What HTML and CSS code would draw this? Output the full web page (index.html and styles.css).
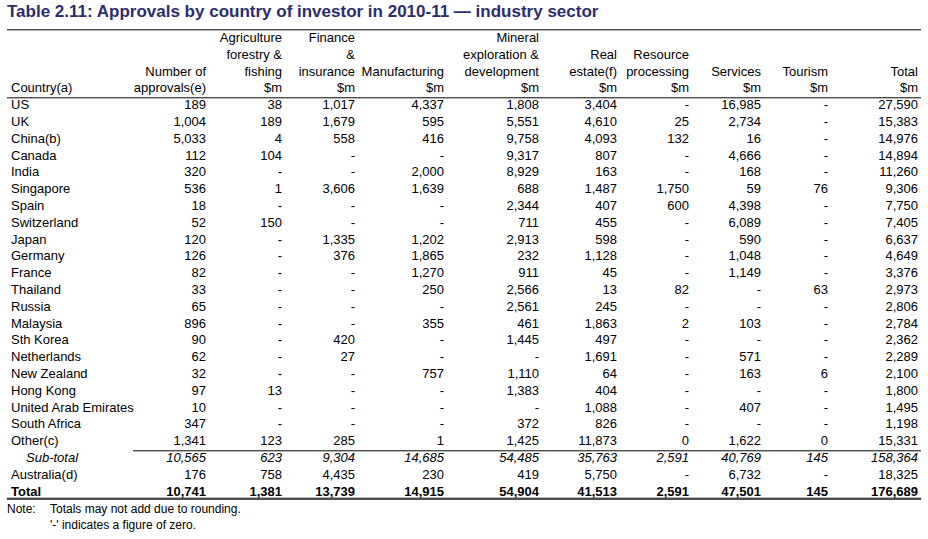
FILE: index.html
```html
<!DOCTYPE html>
<html lang="en">
<head>
<meta charset="utf-8">
<title>Table 2.11</title>
<link rel="stylesheet" href="styles.css">
</head>
<body>
<div class="page">
  <h1 class="title">Table 2.11: Approvals by country of investor in 2010-11 — industry sector</h1>
  <table class="data">
    <colgroup>
      <col class="c-country"><col class="c-num"><col class="c-agri"><col class="c-fin"><col class="c-man"><col class="c-min"><col class="c-real"><col class="c-res"><col class="c-serv"><col class="c-tour"><col class="c-total">
    </colgroup>
    <thead>
      <tr>
        <th class="lbl">Country(a)</th>
        <th>Number of<br>approvals(e)</th>
        <th>Agriculture<br>forestry &amp;<br>fishing<br>$m</th>
        <th>Finance<br>&amp;<br>insurance<br>$m</th>
        <th>Manufacturing<br>$m</th>
        <th>Mineral<br>exploration &amp;<br>development<br>$m</th>
        <th>Real<br>estate(f)<br>$m</th>
        <th>Resource<br>processing<br>$m</th>
        <th>Services<br>$m</th>
        <th>Tourism<br>$m</th>
        <th>Total<br>$m</th>
      </tr>
    </thead>
    <tbody>
      <tr class="first"><td>US</td><td>189</td><td>38</td><td>1,017</td><td>4,337</td><td>1,808</td><td>3,404</td><td>-</td><td>16,985</td><td>-</td><td>27,590</td></tr>
      <tr><td>UK</td><td>1,004</td><td>189</td><td>1,679</td><td>595</td><td>5,551</td><td>4,610</td><td>25</td><td>2,734</td><td>-</td><td>15,383</td></tr>
      <tr><td>China(b)</td><td>5,033</td><td>4</td><td>558</td><td>416</td><td>9,758</td><td>4,093</td><td>132</td><td>16</td><td>-</td><td>14,976</td></tr>
      <tr><td>Canada</td><td>112</td><td>104</td><td>-</td><td>-</td><td>9,317</td><td>807</td><td>-</td><td>4,666</td><td>-</td><td>14,894</td></tr>
      <tr><td>India</td><td>320</td><td>-</td><td>-</td><td>2,000</td><td>8,929</td><td>163</td><td>-</td><td>168</td><td>-</td><td>11,260</td></tr>
      <tr><td>Singapore</td><td>536</td><td>1</td><td>3,606</td><td>1,639</td><td>688</td><td>1,487</td><td>1,750</td><td>59</td><td>76</td><td>9,306</td></tr>
      <tr><td>Spain</td><td>18</td><td>-</td><td>-</td><td>-</td><td>2,344</td><td>407</td><td>600</td><td>4,398</td><td>-</td><td>7,750</td></tr>
      <tr><td>Switzerland</td><td>52</td><td>150</td><td>-</td><td>-</td><td>711</td><td>455</td><td>-</td><td>6,089</td><td>-</td><td>7,405</td></tr>
      <tr><td>Japan</td><td>120</td><td>-</td><td>1,335</td><td>1,202</td><td>2,913</td><td>598</td><td>-</td><td>590</td><td>-</td><td>6,637</td></tr>
      <tr><td>Germany</td><td>126</td><td>-</td><td>376</td><td>1,865</td><td>232</td><td>1,128</td><td>-</td><td>1,048</td><td>-</td><td>4,649</td></tr>
      <tr><td>France</td><td>82</td><td>-</td><td>-</td><td>1,270</td><td>911</td><td>45</td><td>-</td><td>1,149</td><td>-</td><td>3,376</td></tr>
      <tr><td>Thailand</td><td>33</td><td>-</td><td>-</td><td>250</td><td>2,566</td><td>13</td><td>82</td><td>-</td><td>63</td><td>2,973</td></tr>
      <tr><td>Russia</td><td>65</td><td>-</td><td>-</td><td>-</td><td>2,561</td><td>245</td><td>-</td><td>-</td><td>-</td><td>2,806</td></tr>
      <tr><td>Malaysia</td><td>896</td><td>-</td><td>-</td><td>355</td><td>461</td><td>1,863</td><td>2</td><td>103</td><td>-</td><td>2,784</td></tr>
      <tr><td>Sth Korea</td><td>90</td><td>-</td><td>420</td><td>-</td><td>1,445</td><td>497</td><td>-</td><td>-</td><td>-</td><td>2,362</td></tr>
      <tr><td>Netherlands</td><td>62</td><td>-</td><td>27</td><td>-</td><td>-</td><td>1,691</td><td>-</td><td>571</td><td>-</td><td>2,289</td></tr>
      <tr><td>New Zealand</td><td>32</td><td>-</td><td>-</td><td>757</td><td>1,110</td><td>64</td><td>-</td><td>163</td><td>6</td><td>2,100</td></tr>
      <tr><td>Hong Kong</td><td>97</td><td>13</td><td>-</td><td>-</td><td>1,383</td><td>404</td><td>-</td><td>-</td><td>-</td><td>1,800</td></tr>
      <tr><td>United Arab Emirates</td><td>10</td><td>-</td><td>-</td><td>-</td><td>-</td><td>1,088</td><td>-</td><td>407</td><td>-</td><td>1,495</td></tr>
      <tr><td>South Africa</td><td>347</td><td>-</td><td>-</td><td>-</td><td>372</td><td>826</td><td>-</td><td>-</td><td>-</td><td>1,198</td></tr>
      <tr><td>Other(c)</td><td>1,341</td><td>123</td><td>285</td><td>1</td><td>1,425</td><td>11,873</td><td>0</td><td>1,622</td><td>0</td><td>15,331</td></tr>
      <tr class="subtotal"><td>Sub-total</td><td>10,565</td><td>623</td><td>9,304</td><td>14,685</td><td>54,485</td><td>35,763</td><td>2,591</td><td>40,769</td><td>145</td><td>158,364</td></tr>
      <tr><td>Australia(d)</td><td>176</td><td>758</td><td>4,435</td><td>230</td><td>419</td><td>5,750</td><td>-</td><td>6,732</td><td>-</td><td>18,325</td></tr>
      <tr class="total"><td>Total</td><td>10,741</td><td>1,381</td><td>13,739</td><td>14,915</td><td>54,904</td><td>41,513</td><td>2,591</td><td>47,501</td><td>145</td><td>176,689</td></tr>
    </tbody>
  </table>
  <div class="notes">
    <span class="note-label">Note:</span>
    <div class="note-text">
      <p>Totals may not add due to rounding.</p>
      <p>'-' indicates a figure of zero.</p>
    </div>
  </div>
</div>
</body>
</html>
```

FILE: styles.css
```css
html, body {
  margin: 0;
  padding: 0;
  background: #ffffff;
}

.page {
  padding: 0 7px;
  font-family: "Liberation Sans", Arial, sans-serif;
  color: #000;
}

.title {
  margin: 0 0 6px 0;
  font-size: 17px;
  line-height: 23px;
  font-weight: bold;
  color: #2b2d6e;
  white-space: nowrap;
}

.data {
  width: 914px;
  table-layout: fixed;
  border-collapse: collapse;
  border-spacing: 0;
  font-size: 13px;
  line-height: 16.8px;
}

.c-country { width: 126px; }
.c-num { width: 76px; }
.c-agri { width: 76px; }
.c-fin { width: 73px; }
.c-man { width: 89px; }
.c-min { width: 95px; }
.c-real { width: 78px; }
.c-res { width: 72px; }
.c-serv { width: 72px; }
.c-tour { width: 67px; }
.c-total { width: 90px; }

.data th,
.data td {
  padding: 0 3px 0 0;
  text-align: right;
  white-space: nowrap;
  vertical-align: bottom;
  font-weight: normal;
}

.data th {
  padding-top: 1px;
  box-shadow: inset 0 1px 0 #4f4f4f, inset 0 2px 0 #b4b4b4;
}

.data th.lbl,
.data td:first-child {
  text-align: left;
  padding-left: 4px;
  overflow: visible;
}

.data tr.first td {
  box-shadow: inset 0 1px 0 #4f4f4f, inset 0 2px 0 #b4b4b4;
}

.data tr.subtotal td {
  font-style: italic;
  box-shadow: inset 0 1px 0 #4f4f4f, inset 0 2px 0 #b4b4b4;
}

.data tr.subtotal td:first-child {
  padding-left: 19px;
  box-shadow: none;
}

.data tr.total td {
  font-weight: bold;
  box-shadow: inset 0 -2px 0 #4f4f4f, inset 0 -3px 0 #b4b4b4;
}

.notes {
  display: flex;
  font-size: 12px;
  line-height: 16px;
  margin-top: 1px;
}

.note-label {
  width: 43px;
  flex: none;
}

.note-text p {
  margin: 0;
}
```
